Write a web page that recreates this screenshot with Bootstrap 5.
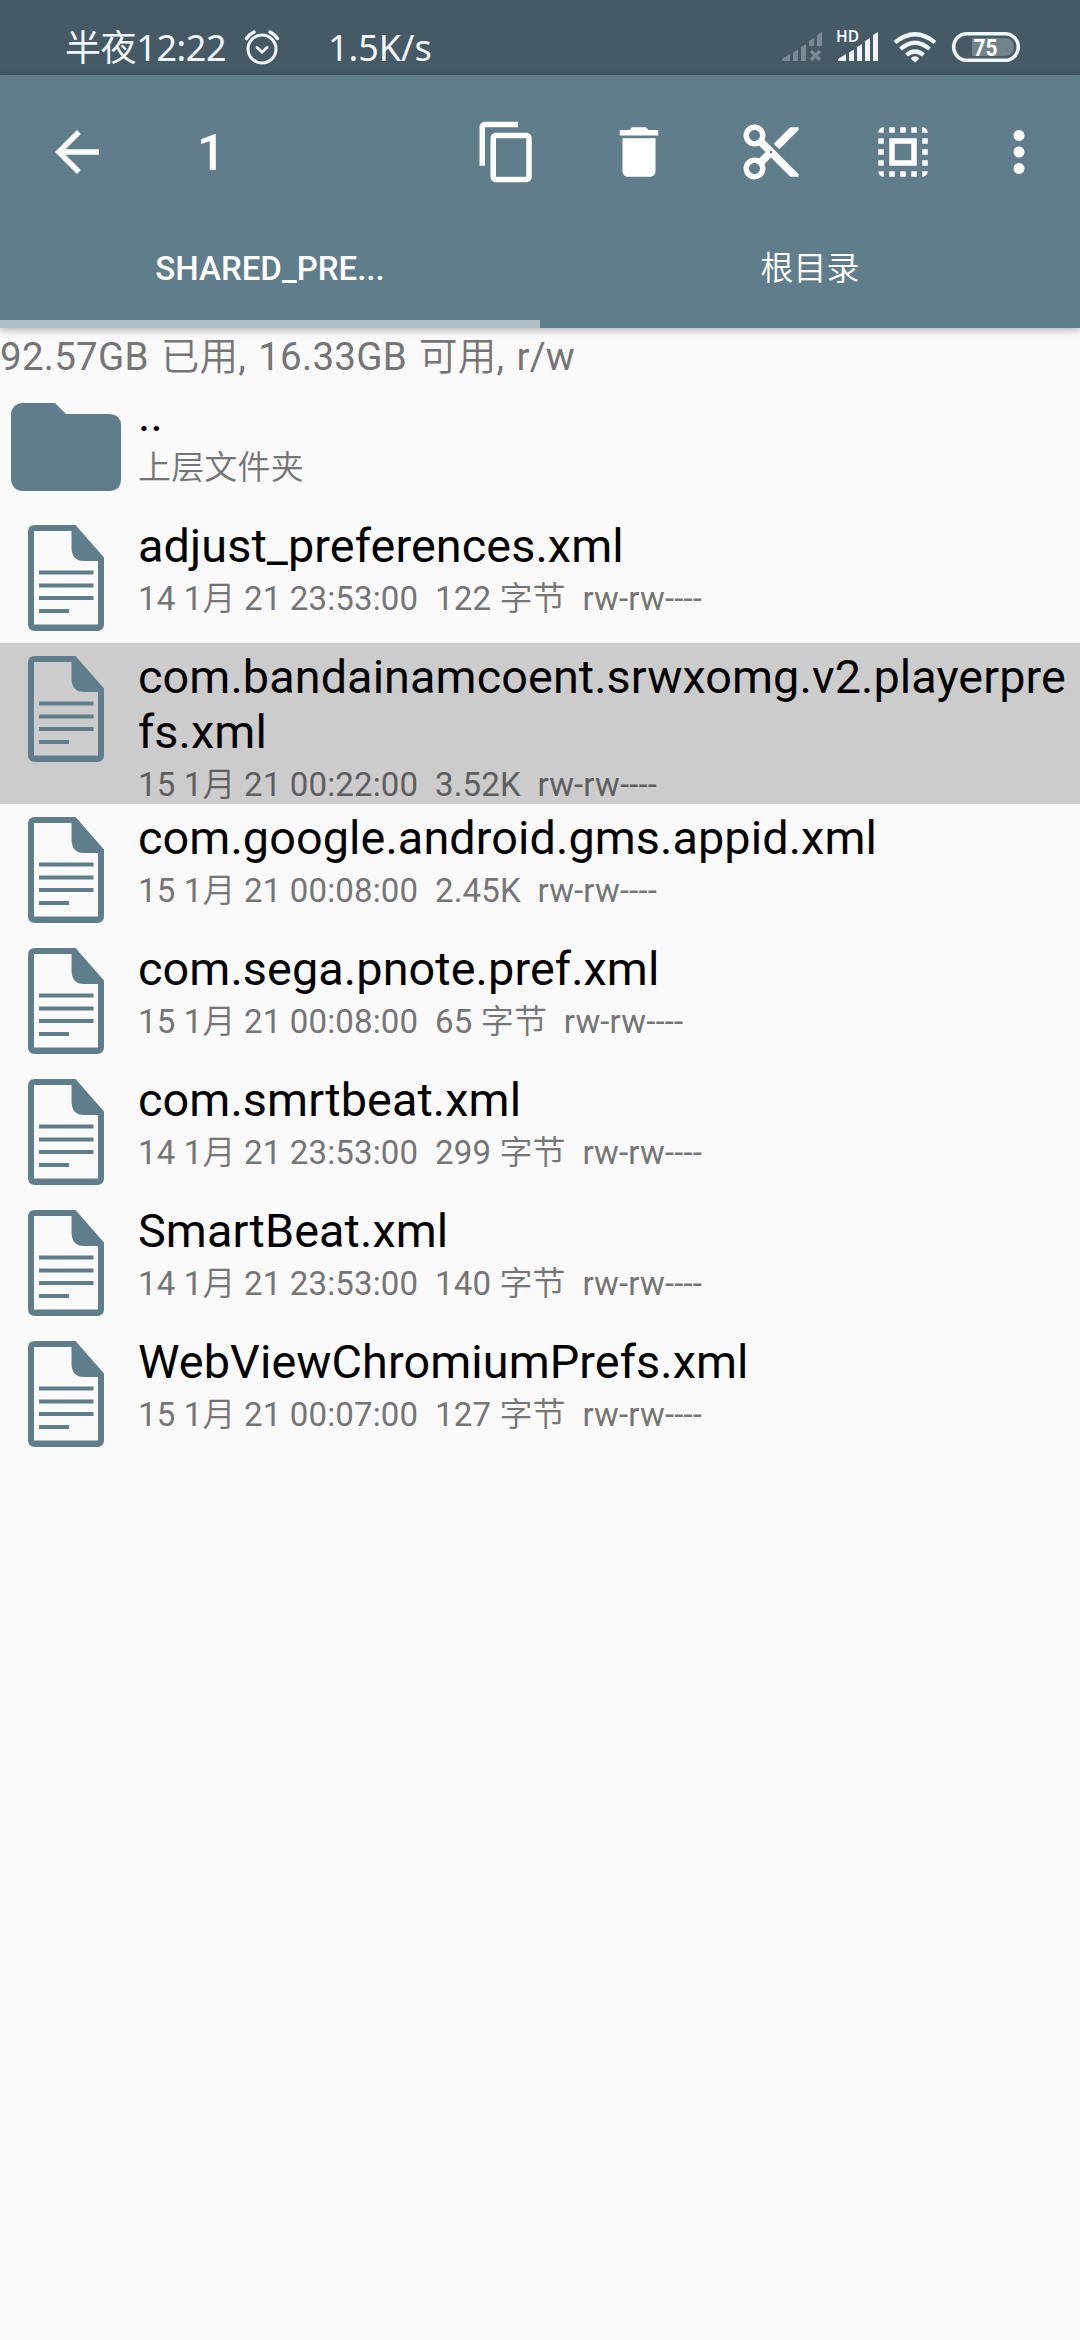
<!DOCTYPE html>
<html lang="zh-CN">
<head>
<meta charset="utf-8">
<meta name="viewport" content="width=device-width, initial-scale=1">
<title>SHARED_PREFS</title>
<link href="https://cdn.jsdelivr.net/npm/bootstrap@5.3.0/dist/css/bootstrap.min.css" rel="stylesheet">
<style>
  :root { --slate: #607d8b; --slate-dark: #455a64; }
  body { background: #fafafa; font-family: Roboto, "Noto Sans CJK SC", sans-serif; color: #000; width: 1080px; min-height: 2340px; }
  svg { display: block; flex: none; }
  .status { height: 75px; background: var(--slate-dark); color: #f0f6fa; padding: 0 60px 0 66px; }
  .status-text { font: 36px/46px "Noto Sans", "Noto Sans CJK SC", sans-serif; margin-top: 25px; white-space: nowrap; }
  .clock { width: 162px; letter-spacing: -.4px; margin-left: -1px; margin-right: 1px; }
  .speed { width: 102px; margin-left: 48px; margin-right: 1px; }
  .appbar { background: var(--slate); color: #fff; box-shadow: 0 2px 8px rgba(0,0,0,.3); height: 253px; }
  .tools { height: 154px; padding: 0 28px 0 44px; }
  .count { font-size: 50px; font-weight: 500; line-height: 58px; margin-left: 87px; padding-top: 1px; }
  .tools-right { gap: 66px; }
  .more-icon { margin-left: -16px; }
  .tab-item { height: 99px; font-size: 33px; font-weight: 500; line-height: 39px; border-bottom: 8px solid transparent; padding-top: 20px; }
  .tab-item.current { border-color: #b0bec5; }
  .tab-cjk { font-weight: 350; }
  .storage { height: 53px; font-size: 38.5px; line-height: 53px; color: #757575; padding-top: 2px; white-space: nowrap; letter-spacing: .25px; word-spacing: 2.3px; }
  .entry { min-height: 131px; }
  .entry.picked { background: #ccc; min-height: 161px; }
  .entry-icon { width: 138px; flex: none; }
  .file-icon { margin: 13px 0 0 28px; }
  .folder-icon { margin: 22px 0 0 11px; }
  .entry-name { font-size: 46.75px; line-height: 55px; padding: 7px 0 0; word-break: break-all; width: 935px; letter-spacing: .1px; }
  .entry-meta { font-size: 33px; line-height: 39px; padding-top: 5px; margin-bottom: -1px; color: #757575; white-space: pre; letter-spacing: .16px; }
  .cjk { font-weight: 350; }
  .picked .entry-meta { color: #5e5e5e; }
</style>
</head>
<body>
<svg width="0" height="0" class="position-absolute" aria-hidden="true">
  <symbol id="doc" viewBox="0 0 76 106">
    <path fill-rule="evenodd" fill="#607d8b" d="M7 0H47.500L76 32.500V99Q76 106 69 106H7Q0 106 0 99V7Q0 0 7 0ZM6 6V99.500H70V36H56Q43.500 36 43.500 22V6Z"/>
    <path stroke="#607d8b" stroke-width="4.200" d="M11 47.500H65.500M11 60.500H65.500M11 73H65.500M11 86H41"/>
  </symbol>
</svg>

<div class="status d-flex">
  <div class="status-text clock">半夜12:22</div>
  <svg width="36" height="36" viewBox="0 0 36 36" fill="none" stroke="#f0f6fa" stroke-linecap="round" style="margin:29px 0 0 16px">
    <circle cx="18" cy="20" r="14" stroke-width="3"/>
    <path stroke-width="3" d="M13 18.500L18 23L23 18.500"/>
    <path stroke-width="3.400" d="M2.500 9.500Q5 5.500 10 3M33.500 9.500Q31 5.500 26 3"/>
  </svg>
  <div class="status-text speed">1.5K/s</div>
  <svg class="ms-auto" width="238" height="75" viewBox="782 0 238 75">
    <g fill="#7c8b93">
      <path d="M782 61V59L790 54V61ZM793 61V52.500L798 49.500V61ZM801 61V47L806 44V61ZM809 46V41L814 38V46ZM817 46V35L822 32V46Z"/>
      <path d="M811 51L820 60M820 51L811 60" stroke="#7c8b93" stroke-width="3.500"/>
    </g>
    <path fill="#f0f4fa" d="M838 61V59L846 54V61ZM849 61V52.500L854 49.500V61ZM857 61V47L862 44V61ZM865 61V41L870 38V61ZM873 61V35L878 32V61Z"/>
    <text x="836" y="42" font-family="Noto Sans" font-size="15.500" font-weight="600" fill="#f0f6fa" textLength="23">HD</text>
    <g fill="none" stroke="#f0f6fa" stroke-width="4.200">
      <path d="M895 42.500Q915 26 935 42.500M900.500 49Q915 36.500 929.500 49M906.500 55Q915 48 923.500 55"/>
    </g>
    <path fill="#f0f6fa" d="M911 58Q915 54.500 919 58Q919 59.500 915 62.500Q911 59.500 911 58Z"/>
    <path fill="#72838b" d="M972 38H1004Q1014 38 1014 47Q1014 56 1004 56H972Z"/>
    <rect x="953.700" y="33.700" width="64.600" height="26.600" rx="13.300" fill="none" stroke="#f0f6fa" stroke-width="3.600"/>
    <text x="973.500" y="55.500" font-family="Roboto" font-size="23.500" font-weight="700" fill="#fff" textLength="24" lengthAdjust="spacingAndGlyphs">75</text>
  </svg>
</div>

<header class="appbar position-relative">
  <div class="tools d-flex align-items-center">
    <svg width="66" height="66" viewBox="0 0 24 24" fill="#fff"><path d="M20 11H7.830l5.590-5.590L12 4l-8 8 8 8 1.410-1.410L7.830 13H20v-2z"/></svg>
    <span class="count">1</span>
    <div class="tools-right d-flex ms-auto">
      <svg width="66" height="66" viewBox="0 0 24 24" fill="#fff"><path d="M16 1H4c-1.100 0-2 .9-2 2v14h2V3h12V1zm3 4H8c-1.100 0-2 .9-2 2v14c0 1.100.9 2 2 2h11c1.100 0 2-.9 2-2V7c0-1.100-.9-2-2-2zm0 16H8V7h11v14z"/></svg>
      <svg width="66" height="66" viewBox="0 0 24 24" fill="#fff"><path d="M6 19c0 1.100.9 2 2 2h8c1.100 0 2-.9 2-2V7H6v12zM19 4h-3.500l-1-1h-5l-1 1H5v2h14V4z"/></svg>
      <svg width="66" height="66" viewBox="0 0 24 24" fill="#fff"><path d="M9.640 7.640c.23-.5.36-1.050.36-1.640 0-2.210-1.790-4-4-4S2 3.790 2 6s1.790 4 4 4c.59 0 1.140-.13 1.640-.36L10 12l-2.360 2.360C7.140 14.130 6.590 14 6 14c-2.210 0-4 1.790-4 4s1.790 4 4 4 4-1.790 4-4c0-.59-.13-1.140-.36-1.640L12 14l7 7h3v-1L9.640 7.640zM6 8c-1.100 0-2-.89-2-2s.9-2 2-2 2 .89 2 2-.9 2-2 2zm0 12c-1.100 0-2-.89-2-2s.9-2 2-2 2 .89 2 2-.9 2-2 2zm6-7.500c-.28 0-.5-.22-.5-.5s.22-.5.5-.5.5.22.5.5-.22.5-.5.5zM19 3l-6 6 2 2 7-7V3z"/></svg>
      <svg width="66" height="66" viewBox="0 0 24 24" fill="#fff"><path d="M3 5h2V3c-1.100 0-2 .9-2 2zm0 8h2v-2H3v2zm4 8h2v-2H7v2zM3 9h2V7H3v2zm10-6h-2v2h2V3zm6 0v2h2c0-1.100-.9-2-2-2zM5 21v-2H3c0 1.100.9 2 2 2zm-2-4h2v-2H3v2zM9 3H7v2h2V3zm2 18h2v-2h-2v2zm8-8h2v-2h-2v2zm0 8c1.100 0 2-.9 2-2h-2v2zm0-12h2V7h-2v2zm0 8h2v-2h-2v2zm-4 4h2v-2h-2v2zm0-16h2V3h-2v2zM7 17h10V7H7v10zm2-8h6v6H9V9z"/></svg>
      <svg class="more-icon" width="66" height="66" viewBox="0 0 24 24" fill="#fff"><path d="M12 8c1.100 0 2-.9 2-2s-.9-2-2-2-2 .9-2 2 .9 2 2 2zm0 2c-1.100 0-2 .9-2 2s.9 2 2 2 2-.9 2-2-.9-2-2-2zm0 6c-1.100 0-2 .9-2 2s.9 2 2 2 2-.9 2-2-.9-2-2-2z"/></svg>
    </div>
  </div>
  <nav class="row g-0 text-center">
    <div class="col-6 tab-item current">SHARED_PRE...</div>
    <div class="col-6 tab-item tab-cjk">根目录</div>
  </nav>
</header>

<main>
  <div class="storage">92.57GB <span class="cjk">已用</span>, 16.33GB <span class="cjk">可用</span>, r/w</div>
  <div class="entry d-flex">
    <div class="entry-icon"><svg class="folder-icon" width="110" height="88" viewBox="0 0 110 88"><path fill="#607d8b" d="M11 0H44L55 11H99Q110 12 110 22V77Q110 87 99 88H11Q1 87 0 77V11Q1 1 11 0Z"/></svg></div>
    <div><div class="entry-name">..</div><div class="entry-meta"><span class="cjk">上层文件夹</span></div></div>
  </div>
  <div class="entry d-flex">
    <div class="entry-icon"><svg class="file-icon" width="76" height="106"><use href="#doc"/></svg></div>
    <div><div class="entry-name">adjust_preferences.xml</div><div class="entry-meta">14 1<span class="cjk">月</span> 21 23:53:00  122 <span class="cjk">字节</span>  rw-rw----</div></div>
  </div>
  <div class="entry picked d-flex">
    <div class="entry-icon"><svg class="file-icon" width="76" height="106"><use href="#doc"/></svg></div>
    <div><div class="entry-name">com.bandainamcoent.srwxomg.v2.playerprefs.xml</div><div class="entry-meta">15 1<span class="cjk">月</span> 21 00:22:00  3.52K  rw-rw----</div></div>
  </div>
  <div class="entry d-flex">
    <div class="entry-icon"><svg class="file-icon" width="76" height="106"><use href="#doc"/></svg></div>
    <div><div class="entry-name">com.google.android.gms.appid.xml</div><div class="entry-meta">15 1<span class="cjk">月</span> 21 00:08:00  2.45K  rw-rw----</div></div>
  </div>
  <div class="entry d-flex">
    <div class="entry-icon"><svg class="file-icon" width="76" height="106"><use href="#doc"/></svg></div>
    <div><div class="entry-name">com.sega.pnote.pref.xml</div><div class="entry-meta">15 1<span class="cjk">月</span> 21 00:08:00  65 <span class="cjk">字节</span>  rw-rw----</div></div>
  </div>
  <div class="entry d-flex">
    <div class="entry-icon"><svg class="file-icon" width="76" height="106"><use href="#doc"/></svg></div>
    <div><div class="entry-name">com.smrtbeat.xml</div><div class="entry-meta">14 1<span class="cjk">月</span> 21 23:53:00  299 <span class="cjk">字节</span>  rw-rw----</div></div>
  </div>
  <div class="entry d-flex">
    <div class="entry-icon"><svg class="file-icon" width="76" height="106"><use href="#doc"/></svg></div>
    <div><div class="entry-name">SmartBeat.xml</div><div class="entry-meta">14 1<span class="cjk">月</span> 21 23:53:00  140 <span class="cjk">字节</span>  rw-rw----</div></div>
  </div>
  <div class="entry d-flex">
    <div class="entry-icon"><svg class="file-icon" width="76" height="106"><use href="#doc"/></svg></div>
    <div><div class="entry-name">WebViewChromiumPrefs.xml</div><div class="entry-meta">15 1<span class="cjk">月</span> 21 00:07:00  127 <span class="cjk">字节</span>  rw-rw----</div></div>
  </div>
</main>
<script src="https://cdn.jsdelivr.net/npm/bootstrap@5.3.0/dist/js/bootstrap.bundle.min.js"></script>
</body>
</html>
